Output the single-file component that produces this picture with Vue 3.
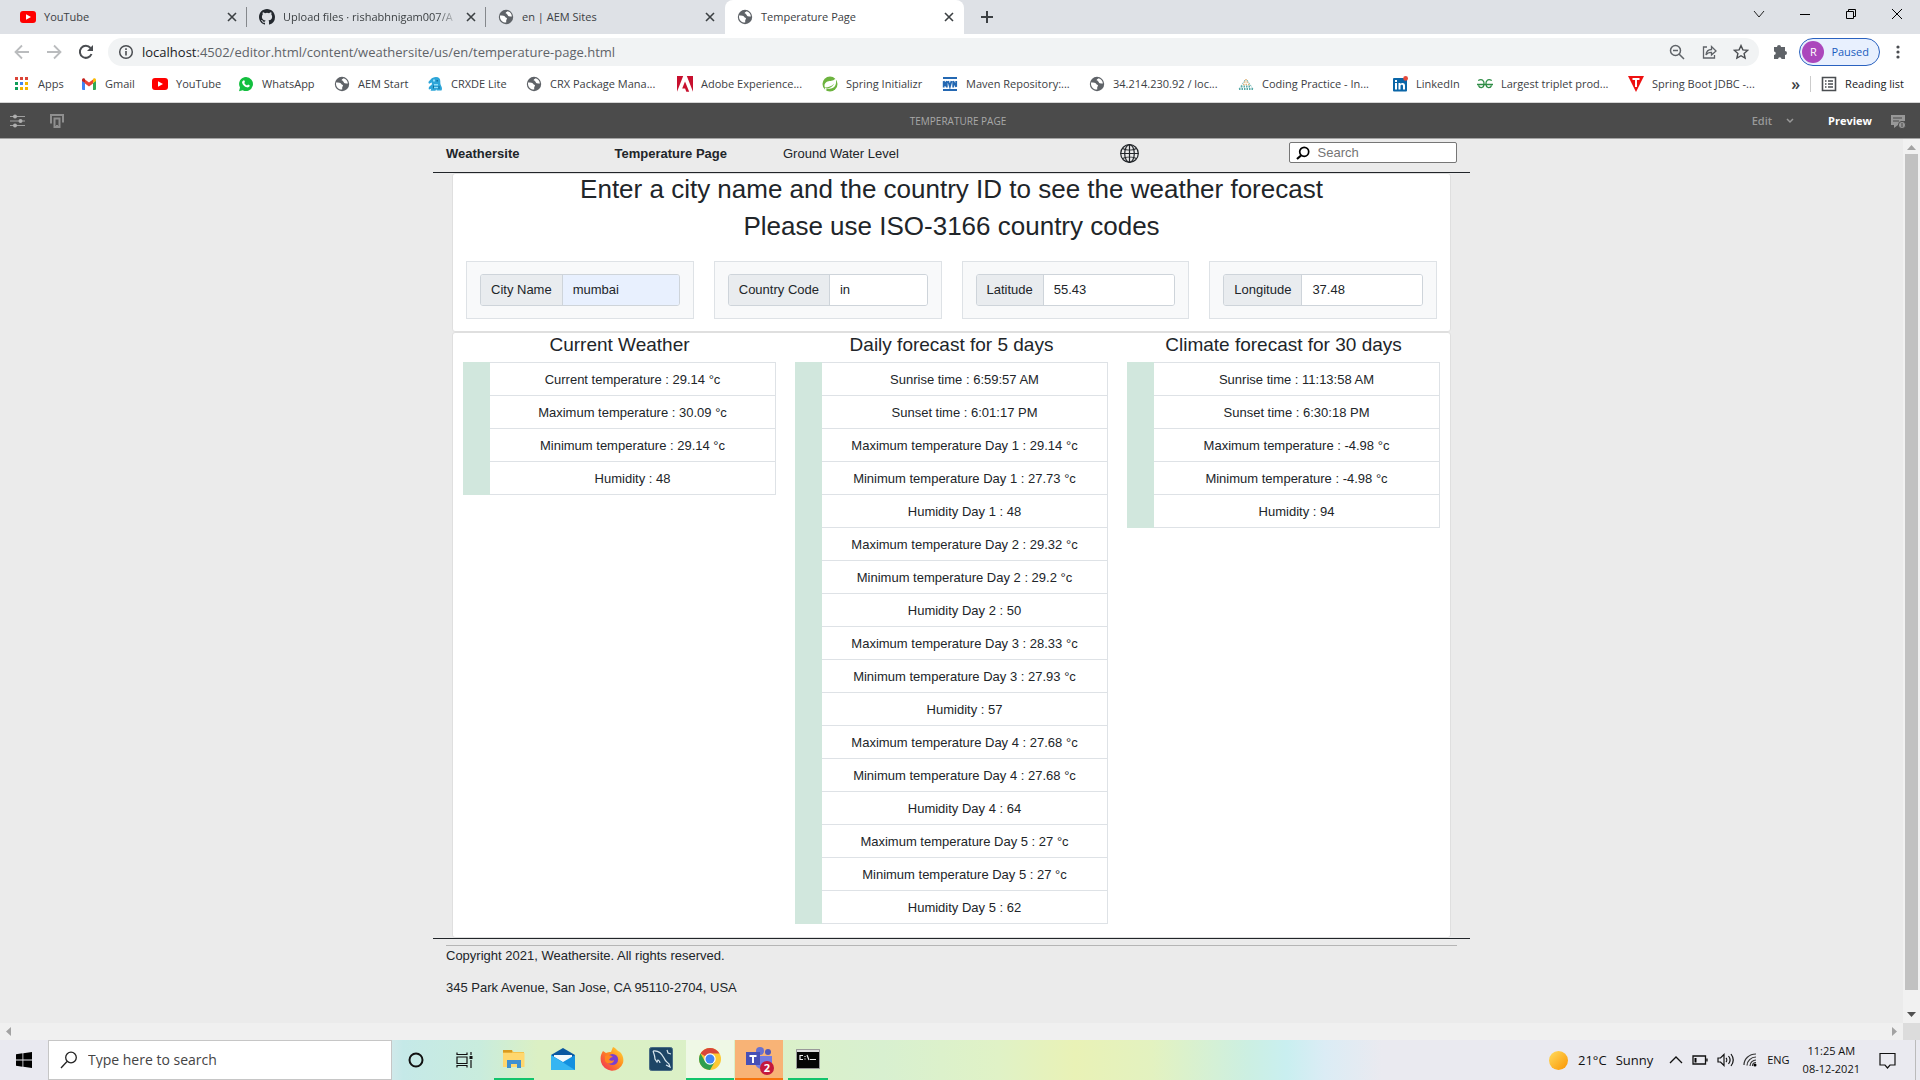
<script setup>
import { ref } from 'vue'

const tabs = [
  { title: 'YouTube', icon: 'youtube' },
  { title: 'Upload files · rishabhnigam007/A', icon: 'github', fade: true },
  { title: 'en | AEM Sites', icon: 'globe' },
  { title: 'Temperature Page', icon: 'globe', active: true }
]

const bookmarks = [
  { title: 'Apps', icon: 'apps', width: 67 },
  { title: 'Gmail', icon: 'gmail', width: 71 },
  { title: 'YouTube', icon: 'youtube', width: 86 },
  { title: 'WhatsApp', icon: 'whatsapp', width: 96 },
  { title: 'AEM Start', icon: 'globe', width: 93 },
  { title: 'CRXDE Lite', icon: 'crxde', width: 99 },
  { title: 'CRX Package Mana...', icon: 'globe', width: 151 },
  { title: 'Adobe Experience...', icon: 'adobe', width: 145 },
  { title: 'Spring Initializr', icon: 'spring', width: 120 },
  { title: 'Maven Repository:...', icon: 'maven', width: 147 },
  { title: '34.214.230.92 / loc...', icon: 'globe', width: 149 },
  { title: 'Coding Practice - In...', icon: 'coding', width: 154 },
  { title: 'LinkedIn', icon: 'linkedin', width: 85 },
  { title: 'Largest triplet prod...', icon: 'geeks', width: 151 },
  { title: 'Spring Boot JDBC -...', icon: 'tpoint', width: 150 }
]

const fields = ref([
  { id: 'city', label: 'City Name', value: 'mumbai', filled: true },
  { id: 'country', label: 'Country Code', value: 'in' },
  { id: 'latitude', label: 'Latitude', value: '55.43' },
  { id: 'longitude', label: 'Longitude', value: '37.48' }
])

const forecasts = [
  {
    title: 'Current Weather',
    rows: [
      'Current temperature : 29.14 °c',
      'Maximum temperature : 30.09 °c',
      'Minimum temperature : 29.14 °c',
      'Humidity : 48'
    ]
  },
  {
    title: 'Daily forecast for 5 days',
    rows: [
      'Sunrise time : 6:59:57 AM',
      'Sunset time : 6:01:17 PM',
      'Maximum temperature Day 1 : 29.14 °c',
      'Minimum temperature Day 1 : 27.73 °c',
      'Humidity Day 1 : 48',
      'Maximum temperature Day 2 : 29.32 °c',
      'Minimum temperature Day 2 : 29.2 °c',
      'Humidity Day 2 : 50',
      'Maximum temperature Day 3 : 28.33 °c',
      'Minimum temperature Day 3 : 27.93 °c',
      'Humidity : 57',
      'Maximum temperature Day 4 : 27.68 °c',
      'Minimum temperature Day 4 : 27.68 °c',
      'Humidity Day 4 : 64',
      'Maximum temperature Day 5 : 27 °c',
      'Minimum temperature Day 5 : 27 °c',
      'Humidity Day 5 : 62'
    ]
  },
  {
    title: 'Climate forecast for 30 days',
    rows: [
      'Sunrise time : 11:13:58 AM',
      'Sunset time : 6:30:18 PM',
      'Maximum temperature : -4.98 °c',
      'Minimum temperature : -4.98 °c',
      'Humidity : 94'
    ]
  }
]

const url = ref('localhost:4502/editor.html/content/weathersite/us/en/temperature-page.html')
</script>

<template>
  <div class="desktop">
    <svg class="defs" aria-hidden="true">
      <defs>
        <symbol id="i-youtube" viewBox="0 0 16 16"><rect y="2" width="16" height="12" rx="3" fill="#f00" /><path d="M6 5.200v5.600L11 8z" fill="#fff" /></symbol>
        <symbol id="i-github" viewBox="0 0 16 16"><path fill="#24292f" d="M8 0C3.580 0 0 3.580 0 8c0 3.540 2.290 6.530 5.470 7.590.4.070.55-.17.55-.38 0-.19-.01-.82-.01-1.490-2.010.37-2.530-.49-2.690-.94-.09-.23-.48-.94-.82-1.130-.28-.15-.68-.52-.01-.53.63-.01 1.080.58 1.230.82.72 1.210 1.870.87 2.330.66.070-.52.28-.87.51-1.070-1.780-.2-3.640-.89-3.640-3.950 0-.87.31-1.590.82-2.150-.08-.2-.36-1.020.08-2.120 0 0 .67-.21 2.200.82a7.600 7.600 0 0 1 4 0c1.530-1.040 2.200-.82 2.200-.82.44 1.100.16 1.920.08 2.120.51.56.82 1.270.82 2.150 0 3.070-1.870 3.750-3.650 3.950.29.25.54.73.54 1.480 0 1.070-.01 1.930-.01 2.200 0 .21.15.46.55.38A8 8 0 0 0 16 8c0-4.420-3.580-8-8-8z" /></symbol>
        <symbol id="i-globe" viewBox="0 0 16 16"><circle cx="8" cy="8" r="7.200" fill="#5f6368" /><path fill="#fff" d="M2 6.600c2.500 0 5 .2 5.300 1.500.3 1 1.700.4 1.700 1.500 0 1-.8 1.200-.8 2.200v1.800C5 13.800 2.200 11.500 2 8zM9.500 2.200c-.4.900-1.800.7-1.800 1.900 0 1 .9 1 1.600 1.300.7.400.5 1.600 1.500 1.800 1 .2 1.800.2 3.100.2-.2-2.400-1.700-4.500-4.400-5.200z" /></symbol>
        <symbol id="i-apps" viewBox="0 0 16 16"><path fill="#db4437" d="M1 1h3v3H1zM6 1h3v3H6zM11 1h3v3h-3z" /><path fill="#0f9d58" d="M1 6h3v3H1zM1 11h3v3H1z" /><path fill="#4285f4" d="M6 6h3v3H6z" /><path fill="#f4b400" d="M11 6h3v3h-3zM6 11h3v3H6zM11 11h3v3h-3z" /></symbol>
        <symbol id="i-gmail" viewBox="0 0 16 16"><path fill="#4285f4" d="M1 4.500 4 7v7H2a1 1 0 0 1-1-1z" /><path fill="#34a853" d="M15 4.500 12 7v7h2a1 1 0 0 0 1-1z" /><path fill="#ea4335" d="M4 3.500 8 6.600l4-3.100v4L8 10.500 4 7.500z" /><path fill="#c5221f" d="M1 4c0-1.700 1.700-2.300 3-1.200V7L1 5z" /><path fill="#fbbc04" d="M15 4c0-1.700-1.700-2.300-3-1.200V7l3-2z" /></symbol>
        <symbol id="i-whatsapp" viewBox="0 0 16 16"><path fill="#13bf3f" d="M8 1a7 7 0 0 0-6 10.500L1 15.200l3.700-1A7 7 0 1 0 8 1z" /><path fill="#fff" d="M5.400 4.400c.6-.4 1-.1 1.500 1.300.1.500-.6.900-.6 1.200.5 1.100 1.500 2 2.700 2.500.4 0 .8-1 1.200-.9 1.200.6 1.700.8 1.500 1.500-.3 1-1.700 1.600-2.800 1.300-2.500-.7-4.300-2.500-4.800-4.600-.1-1 .4-1.800 1.300-2.300z" /></symbol>
        <symbol id="i-crxde" viewBox="0 0 16 16"><path fill="#2ca5d8" d="M9 1c3 0 4.500 2 4.300 4.500-.1 2 .2 3 .9 4.500.6 1.500 1.300 2.500.3 4.500H9.700l-.5-1.200-.7 1.500H3.600l.7-2-2.300.6c-.9-2 .8-3.900 2.600-4.500L5 6.500 2 7.700 1.300 6C3 5 4 1 9 1z" /><path fill="#8fdcf7" d="M6 3.500h2v2H6zM7 8h4v1.500H7zM6 11h5v1H6z" /><path fill="#136f9d" d="M9.500 4h1.500v1.500H9.500zM6 9.500h1v3H6zM11.500 10h1v3h-1z" /></symbol>
        <symbol id="i-adobe" viewBox="0 0 16 16"><path fill="#c8102e" d="M0 0h6.200L0 15.800zM16 0H9.800L16 15.800zM8 5.500l4.200 10.300H9.300l-1.200-3.300H5.200z" /></symbol>
        <symbol id="i-spring" viewBox="0 0 16 16"><circle cx="8" cy="8" r="7.500" fill="#6db33f" /><path fill="#fff" d="M13.600 2c1 3.500.6 7.500-1.700 9.300C9.600 13.100 6 12.700 3 12.700c4-.3 7.200-1.300 9.300-5.200C9.400 10.700 6.500 11.300 3 11.400 1.600 8.500 3.500 5.800 6.500 5.200 9 4.700 12 5 13.600 2z" /><circle cx="3.700" cy="13" r=".9" fill="#fff" /></symbol>
        <symbol id="i-maven" viewBox="0 0 16 16"><path fill="#2468b2" d="M1 1h14v2H1zM1 13h14v2H1z" /><path fill="none" stroke="#2468b2" stroke-width="1.800" d="M1.700 11.500V5.200l1.600 3.500 1.500-3.500v6.300M6.200 5l1.700 5.500L9.500 5M11.200 11.500V5.200l3 5.500V5" /></symbol>
        <symbol id="i-coding" viewBox="0 0 16 16"><path fill="none" stroke="#e0b37a" stroke-width="1.500" stroke-dasharray="1.500 1" d="M8 3v2M6 6h5M5 8.500h7" /><path fill="none" stroke="#58aaa8" stroke-width="1.800" stroke-dasharray="1.500 1" d="M3 10.500h10M1 13h14" /><path fill="none" stroke="#58aaa8" stroke-width="1" stroke-dasharray="1 1" d="M7 4 1 13M9 4l6 9" /></symbol>
        <symbol id="i-linkedin" viewBox="0 0 16 16"><rect x="1" y="2" width="14" height="13.500" rx="1" fill="#0a66a8" /><path fill="#fff" d="M3 7h2v6.500H3zM3 4h2v2H3zM6.500 7h2v1c1-1.700 4.500-1.600 4.500 1.500v4h-2V10c0-1.700-2.500-1.700-2.500 0v3.500h-2z" /><circle cx="13.600" cy="2.400" r="2.400" fill="#e5493a" /></symbol>
        <symbol id="i-geeks" viewBox="0 0 16 16"><path fill="none" stroke="#2f8d46" stroke-width="1.300" d="M1.200 4.500C5 2.500 7.500 4.500 7 8.500c-.4 4-4.500 4-5.500 1M14.800 4.500C11 2.500 8.500 4.500 9 8.500c.4 4 4.500 4 5.500 1M0 8.500h16" /></symbol>
        <symbol id="i-tpoint" viewBox="0 0 16 16"><path fill="#e11" d="M0 0h16L8 16z" /><path fill="#fff" d="M4.500 2h7v2H9v7H7V4H4.500z" /></symbol>
      </defs>
    </svg>

    <!-- Browser tab strip -->
    <header class="tabstrip">
      <div v-for="tab in tabs" :key="tab.title" class="tab" :class="{ active: tab.active }">
        <svg class="ico"><use :href="'#i-' + tab.icon" /></svg>
        <span class="tab-title" :class="{ fade: tab.fade }">{{ tab.title }}</span>
        <button class="plain" aria-label="Close tab">
          <svg width="10" height="10" viewBox="0 0 10 10"><path d="M1 1l8 8M9 1L1 9" stroke="#3c4043" stroke-width="1.600" /></svg>
        </button>
      </div>
      <button class="plain new-tab" aria-label="New tab">
        <svg width="14" height="14" viewBox="0 0 14 14"><path d="M7 1v12M1 7h12" stroke="#3c4043" stroke-width="2" /></svg>
      </button>
      <div class="window-buttons">
        <button class="plain" aria-label="Search tabs"><svg width="12" height="12" viewBox="0 0 12 12"><path d="M1 3l5 6 5-6" fill="none" stroke="#222" /></svg></button>
        <button class="plain" aria-label="Minimize"><svg width="12" height="12" viewBox="0 0 12 12"><path d="M1 6.500h10" stroke="#000" /></svg></button>
        <button class="plain" aria-label="Restore"><svg width="12" height="12" viewBox="0 0 12 12"><path d="M1.500 3.500h7v7h-7zM3.500 3.500v-2h7v7h-2" fill="none" stroke="#000" /></svg></button>
        <button class="plain" aria-label="Close"><svg width="12" height="12" viewBox="0 0 12 12"><path d="M1 1l10 10M11 1L1 11" stroke="#000" /></svg></button>
      </div>
    </header>

    <!-- Address bar -->
    <div class="toolbar">
      <div class="nav-buttons">
        <button class="plain" aria-label="Back"><svg width="16" height="16" viewBox="0 0 16 16"><path d="M15 8H2M8 1.500L1.500 8 8 14.500" fill="none" stroke="#babcbe" stroke-width="1.800" /></svg></button>
        <button class="plain" aria-label="Forward"><svg width="16" height="16" viewBox="0 0 16 16"><path d="M1 8h13M8 1.500L14.500 8 8 14.500" fill="none" stroke="#babcbe" stroke-width="1.800" /></svg></button>
        <button class="plain" aria-label="Reload"><svg width="16" height="16" viewBox="0 0 16 16"><path d="M13.500 10A6 6 0 1 1 12.500 4" fill="none" stroke="#4a4d51" stroke-width="2" /><path d="M15 1v6H9z" fill="#4a4d51" /></svg></button>
      </div>
      <div class="omnibox">
        <svg width="16" height="16" viewBox="0 0 16 16"><circle cx="8" cy="8" r="6.300" fill="none" stroke="#4a4d51" stroke-width="1.500" /><path d="M8 7v4.500M8 4.300v1.600" stroke="#4a4d51" stroke-width="1.600" /></svg>
        <div class="url"><span class="host">localhost</span>{{ url.slice(9) }}</div>
        <button class="plain" aria-label="Zoom"><svg width="16" height="16" viewBox="0 0 16 16"><circle cx="6.500" cy="6.500" r="5" fill="none" stroke="#5f6368" stroke-width="1.500" /><path d="M10 10l5 5M4 6.500h5" stroke="#5f6368" stroke-width="1.500" /></svg></button>
        <button class="plain" aria-label="Share"><svg width="16" height="16" viewBox="0 0 16 16"><path d="M6 3H2.500v11h11v-3M5 11c.3-4 2.500-5.500 5.500-5.500V2.500L15 7l-4.500 4V8.300C8 8.200 6.300 9 5 11z" fill="none" stroke="#5f6368" stroke-width="1.300" /></svg></button>
        <button class="plain" aria-label="Bookmark this tab"><svg width="16" height="16" viewBox="0 0 16 16"><path d="M8 1.600l1.900 4.300 4.700.5-3.500 3.100 1 4.600L8 11.700l-4.100 2.400 1-4.600-3.500-3.100 4.700-.5z" fill="none" stroke="#4a4d51" stroke-width="1.400" /></svg></button>
      </div>
      <button class="plain puzzle" aria-label="Extensions"><svg width="16" height="16" viewBox="0 0 16 16"><path fill="#5f6368" d="M5 3a2 2 0 0 1 4 0h4v4a2 2 0 0 1 0 4v4H9.500a1.700 1.700 0 0 0-3.400 0H2v-4a1.700 1.700 0 0 0 0-3.500V3z" /></svg></button>
      <button class="profile"><span class="avatar">R</span>Paused</button>
      <button class="plain" aria-label="Menu"><svg width="16" height="16" viewBox="0 0 16 16" fill="#4a4d51"><circle cx="8" cy="3" r="1.600" /><circle cx="8" cy="8" r="1.600" /><circle cx="8" cy="13" r="1.600" /></svg></button>
    </div>

    <!-- Bookmarks -->
    <nav class="bookmarks">
      <a v-for="mark in bookmarks" :key="mark.title" href="#" class="bookmark" :style="{ width: mark.width + 'px' }">
        <svg class="ico"><use :href="'#i-' + mark.icon" /></svg>{{ mark.title }}
      </a>
      <div class="bookmark-end">
        <span class="more">»</span>
        <a href="#" class="reading">
          <svg width="16" height="16" viewBox="0 0 16 16"><path d="M1.500 1.500h13v13h-13z" fill="none" stroke="#4a4d51" stroke-width="1.600" /><path d="M4 5h1.500M7 5h5M4 8h1.500M7 8h5M4 11h1.500M7 11h5" stroke="#4a4d51" stroke-width="1.500" /></svg>Reading list
        </a>
      </div>
    </nav>

    <!-- Page editor bar -->
    <div class="editor-bar">
      <div class="editor-side">
        <button class="plain" aria-label="Page information"><svg width="16" height="16" viewBox="0 0 16 16"><path d="M0 3.500h15M0 8h15M0 12.500h15" stroke="#a0a0a0" stroke-width="1.200" /><g fill="#b0b0b0"><circle cx="5" cy="3.500" r="2" /><circle cx="10.500" cy="8" r="2" /><circle cx="5" cy="12.500" r="2" /></g></svg></button>
        <button class="plain" aria-label="Emulator"><svg width="16" height="16" viewBox="0 0 16 16" fill="none" stroke="#8f8f8f" stroke-width="2"><path d="M3 9.500H2V2h12v6.500h-1M5.500 5.500h5V14h-5z" /><path d="M7 12.500h2" stroke-width="1" /></svg></button>
      </div>
      <span class="editor-title">TEMPERATURE PAGE</span>
      <div class="editor-side right">
        <button class="mode">Edit</button>
        <svg class="mode-arrow" width="8" height="6" viewBox="0 0 8 6"><path d="M1 1l3 3 3-3" fill="none" stroke="#999" stroke-width="1.500" /></svg>
        <button class="mode current">Preview</button>
        <button class="plain" aria-label="Annotations"><svg width="16" height="16" viewBox="0 0 16 16"><path d="M1 2h14v6a4 4 0 0 0-4 4H8l-4 3v-3H1z" fill="#979797" /><path d="M3 5h9M3 8h6" stroke="#4b4b4b" /><circle cx="12" cy="12" r="3.600" fill="#979797" stroke="#4b4b4b" /><path d="M12 10v4" stroke="#4b4b4b" /></svg></button>
      </div>
    </div>

    <!-- Weathersite page -->
    <div class="viewport">
      <div class="page">
        <div class="site">
          <header class="site-header">
            <a href="#"><b>Weathersite</b></a>
            <a href="#"><b>Temperature Page</b></a>
            <a href="#">Ground Water Level</a>
            <a href="#" class="language" aria-label="Language"><svg width="19" height="19" viewBox="0 0 19 19" fill="none" stroke="#212529" stroke-width="1.200"><circle cx="9.500" cy="9.500" r="8.800" /><ellipse cx="9.500" cy="9.500" rx="4.800" ry="8.800" /><path d="M9.500.5v18M.5 9.500h18M2.500 4.500c4 2 10 2 14 0M2.500 14.500c4-2 10-2 14 0" /></svg></a>
            <label class="search">
              <svg width="14" height="14" viewBox="0 0 14 14"><circle cx="8.200" cy="5.800" r="4.500" fill="none" stroke="#000" stroke-width="1.700" /><path d="M5 9.500L1 13" stroke="#000" stroke-width="2.200" /></svg>
              <input type="search" placeholder="Search" aria-label="Search">
            </label>
          </header>

          <main class="cards">
            <section class="card">
              <h1>Enter a city name and the country ID to see the weather forecast</h1>
              <h1>Please use ISO-3166 country codes</h1>
              <form class="fields" @submit.prevent>
                <div v-for="field in fields" :key="field.id" class="field">
                  <div class="group">
                    <label :for="field.id">{{ field.label }}</label>
                    <input :id="field.id" v-model="field.value" type="text" :class="{ filled: field.filled }">
                  </div>
                </div>
              </form>
            </section>
            <section class="card forecasts">
              <div v-for="forecast in forecasts" :key="forecast.title">
                <h2>{{ forecast.title }}</h2>
                <table>
                  <tbody>
                    <tr v-for="(row, i) in forecast.rows" :key="row">
                      <td v-if="i === 0" class="stripe" :rowspan="forecast.rows.length"></td>
                      <td>{{ row }}</td>
                    </tr>
                  </tbody>
                </table>
              </div>
            </section>
          </main>

          <footer class="site-footer">
            <p>Copyright 2021, Weathersite. All rights reserved.</p>
            <p>345 Park Avenue, San Jose, CA 95110-2704, USA</p>
          </footer>
        </div>
      </div>
      <div class="scroll-y">
        <svg width="9" height="5" viewBox="0 0 9 5"><path d="M0 5l4.500-5L9 5z" fill="#a3a3a3" /></svg>
        <span class="thumb"></span>
        <svg width="9" height="5" viewBox="0 0 9 5"><path d="M0 0l4.500 5L9 0z" fill="#505050" /></svg>
      </div>
    </div>
    <div class="scroll-x">
      <svg width="5" height="9" viewBox="0 0 5 9"><path d="M5 0L0 4.500 5 9z" fill="#a3a3a3" /></svg>
      <svg width="5" height="9" viewBox="0 0 5 9"><path d="M0 0l5 4.500L0 9z" fill="#a3a3a3" /></svg>
      <span class="corner"></span>
    </div>

    <!-- Windows taskbar -->
    <div class="taskbar">
      <button class="plain start" aria-label="Start"><svg width="16" height="16" viewBox="0 0 16 16"><path d="M0 2.200L6.500 1.300v6.200H0zM7.300 1.200L16 0v7.500H7.300zM0 8.400h6.500v6.300L0 13.800zM7.300 8.400H16V16l-8.700-1.200z" /></svg></button>
      <label class="task-search">
        <svg width="18" height="18" viewBox="0 0 18 18"><circle cx="11" cy="6.500" r="5.300" fill="none" stroke="#222" stroke-width="1.300" /><path d="M7 10.500L1 17" stroke="#222" stroke-width="1.300" /></svg>
        <input type="text" placeholder="Type here to search" aria-label="Type here to search">
      </label>
      <div class="task-tools">
        <button class="plain" aria-label="Cortana"><svg width="16" height="16" viewBox="0 0 16 16"><circle cx="8" cy="8" r="6.500" fill="none" stroke="#111" stroke-width="2" /></svg></button>
        <button class="plain" aria-label="Task view"><svg width="17" height="16" viewBox="0 0 17 16" fill="none" stroke="#111" stroke-width="1.200"><path d="M1 5h10v6.500H1zM1 .5v2h10v-2M1 15.500v-2h10v2M15 0v3M15 8v8" /><path d="M13.500 5.500h3" stroke-width="3" /></svg></button>
      </div>
      <div class="task-apps">
        <button class="plain open" aria-label="File Explorer"><svg width="24" height="24" viewBox="0 0 24 24"><path d="M1 3h9l1.500 2H22v15H1z" fill="#f5c24b" /><path d="M1 6h21.500v14H1z" fill="#ffd76e" /><path d="M1 3h9v2.500H1z" fill="#d99a20" /><path d="M5 13h14v8h-4v-4H9v4H5z" fill="#3f8fd0" /></svg></button>
        <button class="plain" aria-label="Mail"><svg width="24" height="24" viewBox="0 0 24 24"><path d="M0 8l12-7 12 7v3H0z" fill="#0b57a0" /><path d="M3 8h18v7H3z" fill="#f4f8fb" /><path d="M0 8l12 7 12-7v15H0z" fill="#1490df" /><path d="M0 8v15h24z" fill="#36b5f2" /></svg></button>
        <button class="plain" aria-label="Firefox"><svg width="24" height="24" viewBox="0 0 24 24"><defs><linearGradient id="ff" x1="1" y1="0" x2="0" y2="1"><stop offset="0" stop-color="#ffe23e" /><stop offset=".45" stop-color="#ff8a1e" /><stop offset="1" stop-color="#f0265e" /></linearGradient></defs><path d="M3 4l3 2c2-1 3-1 5-1l2-5c3 1 4 4 7 5 3 3 4 7 3 11A11.500 11.500 0 0 1 1 15C0 10 1 7 3 4z" fill="url(#ff)" /><circle cx="12.500" cy="12.500" r="5.600" fill="#7a3fd0" /><path d="M5 9c3-2 6-1 8 1-2 0-3 1-4 3 2 1 4 1 5 0 0 4-6 5-9 1z" fill="#ff8620" /></svg></button>
        <button class="plain" aria-label="MySQL Workbench"><svg width="24" height="24" viewBox="0 0 24 24"><rect x=".5" y=".5" width="23" height="23" rx="2" fill="#1d4566" stroke="#486b83" /><path d="M4 4c6-1 9 3 11 7 1 3 3 4 5 6l1 3-4-2M4 4c1 3 2 5 2 8l2 3 1-2c2 1 2 3 2 3M18 3l1 3 3 1" fill="none" stroke="#d8e6ee" stroke-width="1.200" /></svg></button>
        <button class="plain open focused" aria-label="Chrome"><svg width="24" height="24" viewBox="0 0 24 24"><circle cx="12" cy="12" r="11" fill="#fcc934" /><path d="M12 12L2.500 6.500A11 11 0 0 1 21.500 6.500H12z" fill="#d8473a" /><path d="M2.500 6.500A11 11 0 0 0 12 23l4.800-8.200L7.200 14.800z" fill="#2f9e50" /><circle cx="12" cy="12" r="5.700" fill="#fff" /><circle cx="12" cy="12" r="4.500" fill="#4285f4" /></svg></button>
        <button class="plain alert" aria-label="Teams, 2 notifications"><svg width="26" height="24" viewBox="0 0 26 24"><circle cx="14" cy="4" r="4" fill="#6870cf" /><circle cx="22" cy="5" r="3" fill="#5158ba" /><path d="M9 9h17v7c0 8-16 9-17 0z" fill="#747be0" /><path d="M0 5h14v13H0z" fill="#4750b6" /><path d="M3.500 8h7v2H8v6H6v-6H3.500z" fill="#fff" /></svg><span class="badge">2</span></button>
        <button class="plain open" aria-label="Command Prompt"><svg width="24" height="20" viewBox="0 0 24 20"><path d="M.5.5h23v19H.5z" fill="#050505" stroke="#999" /><path d="M1 1h22v2H1z" fill="#ddd" /><path d="M7 6.500H4v4h3M9 7v1M9 9.500v1M11 6l2 5M14 10.500h6" fill="none" stroke="#eee" stroke-width="1.200" /></svg></button>
      </div>
      <div class="tray">
        <span class="sun"></span>
        <span class="weather"><span>21°C</span><span>Sunny</span></span>
        <div class="tray-icons">
          <svg width="14" height="14" viewBox="0 0 14 14"><path d="M1 10l6-6 6 6" fill="none" stroke="#111" stroke-width="1.300" /></svg>
          <svg width="16" height="14" viewBox="0 0 16 14"><path d="M1 3h12.500v8H1zM15 5.500v3" fill="none" stroke="#111" stroke-width="1.300" /><path d="M2.500 5h2v4.500h-2z" /></svg>
          <svg width="17" height="14" viewBox="0 0 17 14"><path d="M1 5h2.500L7 1.500v11L3.500 9H1zM9 5c1 1 1 3 0 4M11.500 3c2 2.500 2 5.500 0 8M14 1c3 4 3 8 0 12" fill="none" stroke="#111" stroke-width="1.200" /></svg>
          <svg width="14" height="14" viewBox="0 0 14 14"><path d="M1 12C1 6 6 1 13 1M4 12.500C4 8 8 4 13 4M7 13c0-3.500 3-6 6-6M9.500 13c0-2 1.500-3.500 3.500-3.500" fill="none" stroke="#333" stroke-width="1.200" /><circle cx="12" cy="12" r="1.500" /></svg>
        </div>
        <span class="language-code">ENG</span>
        <span class="clock"><span>11:25 AM</span><span>08-12-2021</span></span>
        <button class="plain notify" aria-label="Notifications"><svg width="17" height="17" viewBox="0 0 17 17"><path d="M1 1.500h15v11.500h-5l-2.500 3L6 13H1z" fill="none" stroke="#111" stroke-width="1.200" /></svg></button>
      </div>
    </div>
  </div>
</template>

<style>
body {
  margin: 0;
}
</style>

<style scoped>
* {
  box-sizing: border-box;
}
.desktop {
  display: flex;
  flex-direction: column;
  min-height: 100vh;
  background: #fff;
  color: #3c4043;
  font: 11px/16px "Open Sans", "Noto Sans", sans-serif;
}
.defs {
  position: absolute;
  width: 0;
  height: 0;
}
a {
  color: inherit;
  text-decoration: none;
}
button,
input {
  font: inherit;
  color: inherit;
}
.plain {
  display: flex;
  align-items: center;
  justify-content: center;
  padding: 0;
  border: 0;
  background: none;
}
.ico {
  flex: none;
  width: 16px;
  height: 16px;
}

/* Browser */
.tabstrip {
  display: flex;
  height: 34px;
  padding-left: 8px;
  background: #dee1e6;
}
.tab {
  display: flex;
  align-items: center;
  gap: 8px;
  width: 239px;
  padding: 0 10px 0 12px;
  background: linear-gradient(#85888c, #85888c) right center / 1px 20px no-repeat;
}
.tab:nth-child(3) {
  background: none;
}
.tab.active {
  background: #fff;
  border-radius: 8px 8px 0 0;
}
.tab-title {
  flex: 1;
  white-space: nowrap;
}
.tab-title.fade {
  mask-image: linear-gradient(90deg, #000 88%, transparent);
}
.new-tab {
  width: 28px;
  margin-left: 9px;
}
.window-buttons {
  display: flex;
  gap: 34px;
  margin-left: auto;
  padding: 0 17px 6px 0;
}
.toolbar {
  display: flex;
  align-items: center;
  height: 36px;
  padding: 0 14px;
}
.nav-buttons {
  display: flex;
  gap: 16px;
  width: 94px;
}
.omnibox {
  display: flex;
  align-items: center;
  flex: 1;
  gap: 16px;
  height: 28px;
  padding: 0 10px;
  border-radius: 14px;
  background: #f1f3f4;
}
.url {
  flex: 1;
  margin-left: -8px;
  color: #5f6368;
  font-size: 13px;
}
.host {
  color: #202124;
}
.puzzle {
  margin: 0 11px 0 13px;
}
.profile {
  display: flex;
  align-items: center;
  gap: 7px;
  height: 28px;
  margin-right: 10px;
  padding: 0 10px 0 2px;
  border: 1px solid #2a62c0;
  border-radius: 14px;
  background: #e8f0fe;
  color: #1a5dbe;
}
.avatar {
  width: 22px;
  border-radius: 11px;
  background: #ab47bc;
  color: #fff;
  line-height: 22px;
}
.bookmarks {
  display: flex;
  align-items: center;
  height: 33px;
  padding: 0 16px 4px 14px;
  border-bottom: 1px solid #d5d5d5;
}
.bookmark,
.reading {
  display: flex;
  align-items: center;
  gap: 8px;
  white-space: nowrap;
}
.bookmark-end {
  display: flex;
  flex: 1;
  align-items: center;
  justify-content: flex-end;
  gap: 10px;
}
.more {
  font-size: 16px;
  font-weight: 600;
}
.reading {
  padding-left: 10px;
  border-left: 1px solid #ccc;
  color: #202124;
}

/* Editor bar */
.editor-bar {
  display: flex;
  align-items: center;
  height: 36px;
  padding: 0 14px 0 10px;
  border-bottom: 1px solid #a3a3a3;
  background: #4b4b4b;
  color: #999;
}
.editor-side {
  display: flex;
  align-items: center;
  flex: 1;
  gap: 23px;
}
.editor-title {
  font-size: 10px;
  color: #a8a8a8;
}
.right {
  justify-content: flex-end;
  gap: 18px;
}
.mode {
  padding: 0;
  border: 0;
  background: none;
  font-weight: 600;
}
.mode-arrow {
  margin: 0 16px 0 -4px;
}
.mode.current {
  color: #fff;
  font-weight: 700;
}

/* Page */
.viewport {
  display: flex;
  flex: 1;
}
.page {
  flex: 1;
  background: #ebebeb;
  color: #212529;
  font: 13px/20px "Liberation Sans", Arial, sans-serif;
}
.site {
  max-width: 1037px;
  margin: 0 auto;
}
.site-header {
  display: grid;
  grid-template-columns: repeat(6, minmax(0, 1fr));
  align-items: center;
  height: 34px;
  padding: 0 13px 4px;
  border-bottom: 1px solid #212529;
}
.language {
  grid-column: 5;
  height: 19px;
}
.search {
  display: flex;
  align-items: center;
  gap: 8px;
  height: 21px;
  margin-bottom: 2px;
  padding: 0 6px;
  border: 1px solid #767676;
  border-radius: 2px;
  background: #fff;
}
.search input {
  flex: 1;
  min-width: 0;
  padding: 0;
  border: 0;
  background: none;
}
.search input::placeholder {
  color: #757575;
}
.cards {
  margin: 0 19px;
}
.card {
  border: 1px solid #dfdfdf;
  border-radius: 3px;
  background: #fff;
}
h1,
h2 {
  margin: 0 0 6px;
  font-weight: 400;
  text-align: center;
}
h1 {
  font-size: 26px;
  line-height: 31px;
}
h2 {
  font-size: 19px;
  line-height: 23px;
}
.fields {
  display: grid;
  grid-template-columns: repeat(4, minmax(0, 1fr));
  gap: 20px;
  padding: 13px 13px 12px;
}
.field {
  padding: 12px 13px;
  border: 1px solid #dee2e6;
  background: #f8f9fa;
}
.group {
  display: flex;
  height: 32px;
  border: 1px solid #ced4da;
  border-radius: 3px;
  overflow: hidden;
}
.group label {
  padding: 0 10px;
  border-right: 1px solid #ced4da;
  background: #e9ecef;
  line-height: 30px;
}
.group input {
  flex: 1;
  min-width: 0;
  padding: 0 10px;
  border: 0;
  background: #fff;
}
.group input.filled {
  background: #e8f0fe;
}
.forecasts {
  display: grid;
  grid-template-columns: repeat(3, minmax(0, 1fr));
  gap: 19px;
  padding: 0 10px 13px;
}
table {
  width: 100%;
  border-collapse: collapse;
  table-layout: fixed;
}
td {
  height: 33px;
  padding: 1px 0 0;
  border: 1px solid #dee2e6;
  text-align: center;
}
.stripe {
  width: 26px;
  border-color: #d1e7dd;
  background: #d1e7dd;
}
.site-footer {
  padding: 6px 13px 0;
  border-top: 1px solid #212529;
}
.site-footer p {
  margin: 0 0 12px;
}
.site-footer p:first-child {
  border-top: 1px solid #b5b5b5;
}
.scroll-y {
  display: flex;
  flex-direction: column;
  align-items: center;
  width: 17px;
  padding: 6px 0;
  background: #f1f1f1;
}
.thumb {
  flex: 1;
  width: 13px;
  margin: 4px 0 22px;
  background: #c1c1c1;
}
.scroll-x {
  display: flex;
  align-items: center;
  height: 17px;
  padding-left: 6px;
  background: #f0f0f0;
}
.scroll-x svg:nth-child(2) {
  margin-left: auto;
}
.corner {
  width: 17px;
  height: 17px;
  margin-left: 6px;
  background: #dcdcdc;
}

/* Taskbar */
.taskbar {
  display: flex;
  height: 40px;
  background: linear-gradient(90deg, #e9e9f0 19%, #c5e9e8 21%, #c9ecdd 25%, #dbf0c4 28%, #dbf0c8 40%, #d8f0d0 46%, #e0f2c6 52%, #e9f2b6 56%, #e3f2c0 60%, #ccefe2 65%, #c9eff0 67%, #dbecf5 69%, #eaeaf0 72%);
  color: #111;
}
.start {
  width: 48px;
}
.task-search {
  display: flex;
  align-items: center;
  gap: 10px;
  width: 344px;
  padding: 0 11px;
  border: 1px solid #c6c6c6;
  background: #fff;
  font-size: 14px;
}
.task-search input {
  flex: 1;
  min-width: 0;
  padding: 0;
  border: 0;
}
.task-search input::placeholder {
  color: #444;
}
.task-tools {
  display: flex;
}
.task-tools button {
  width: 48px;
}
.task-apps {
  display: flex;
  gap: 1px;
  margin-left: 2px;
}
.task-apps button {
  position: relative;
  width: 48px;
  border-bottom: 2px solid transparent;
}
.task-apps .open {
  background: linear-gradient(#12c46c, #12c46c) center bottom / 40px 2px no-repeat border-box;
}
.task-apps .focused {
  background: #eff8e6;
  border-color: #12c46c;
}
.task-apps .alert {
  background: #f8b376;
  border-color: #f7740c;
}
.badge {
  position: absolute;
  right: 9px;
  bottom: 3px;
  width: 14px;
  border-radius: 7px;
  background: #c4183c;
  color: #fff;
  font-weight: 700;
  line-height: 14px;
}
.tray {
  display: flex;
  align-items: center;
  margin-left: auto;
  padding-right: 4px;
}
.sun {
  width: 19px;
  height: 19px;
  border-radius: 50%;
  background: linear-gradient(135deg, #ffdd60, #fb9400);
}
.weather {
  display: flex;
  gap: 9px;
  margin: 0 16px 0 10px;
  font-size: 13px;
}
.tray-icons {
  display: flex;
  gap: 9px;
}
.language-code {
  margin: 0 13px 0 10px;
}
.clock {
  display: flex;
  flex-direction: column;
  line-height: 18px;
  text-align: center;
}
.notify {
  height: 40px;
  padding: 0 19px;
  border-right: 1px solid #bbb;
}
</style>
